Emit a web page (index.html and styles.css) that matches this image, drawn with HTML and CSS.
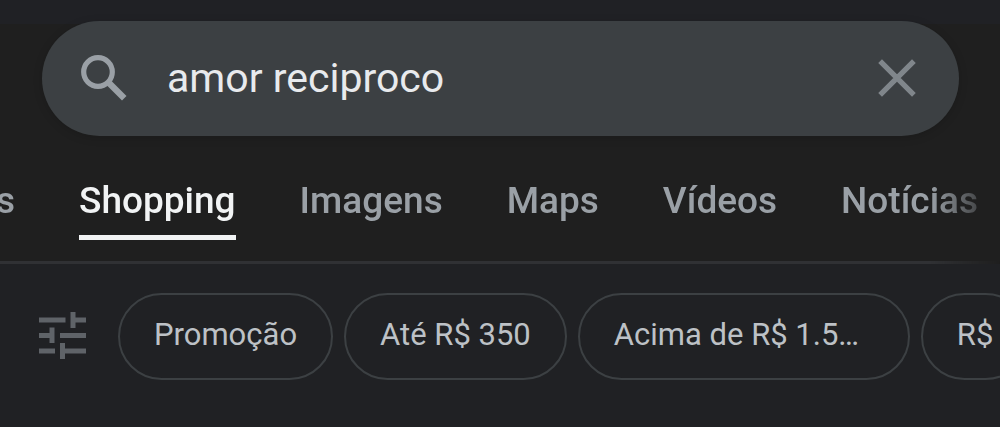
FILE: index.html
```html
<!DOCTYPE html>
<html lang="pt-BR">
<head>
<meta charset="utf-8">
<meta name="viewport" content="width=device-width, initial-scale=1">
<title>amor reciproco</title>
<link rel="stylesheet" href="styles.css">
</head>
<body>
<header class="header">
  <form class="search" role="search">
    <button class="icon-button" type="submit" aria-label="Pesquisar">
      <svg class="search-icon" viewBox="0 0 46 46" aria-hidden="true"><circle cx="17" cy="17" r="14.3" fill="none" stroke="currentColor" stroke-width="5.2"/><path d="M26 30.5 30.5 26l15 15-4.500 4.500z" fill="currentColor"/><path d="m26 26 5 5" stroke="currentColor" stroke-width="4"/></svg>
    </button>
    <input class="search-input" type="text" value="amor reciproco" aria-label="Pesquisa">
    <button class="icon-button clear" type="reset" aria-label="Limpar">
      <svg class="clear-icon" viewBox="0 0 36 36" aria-hidden="true"><path d="M2 2l32 32M34 2 2 34" stroke="currentColor" stroke-width="5"/></svg>
    </button>
  </form>
  <nav class="tabs">
    <a class="tab" href="#">s</a>
    <a class="tab active" href="#" aria-current="page">Shopping</a>
    <a class="tab" href="#">Imagens</a>
    <a class="tab" href="#">Maps</a>
    <a class="tab" href="#">Vídeos</a>
    <a class="tab" href="#">Notícias</a>
  </nav>
</header>
<main class="filters">
  <button class="icon-button tune" type="button" aria-label="Filtros">
    <svg class="tune-icon" viewBox="0 0 48 48" aria-hidden="true"><path fill="currentColor" d="M0 5.500h26.500v5H0zM31.500 0h5v5.500H47v5H36.500V16h-5zM0 21h10.500v-5.500h5V31h-5v-5H0zM21 21h26v5H21zM0 36.500h16v5H0zM21 31h5v5.500h21v5H26V47h-5z"/></svg>
  </button>
  <button class="chip" type="button">Promoção</button>
  <button class="chip" type="button">Até R$ 350</button>
  <button class="chip wide" type="button">Acima de R$ 1.5…</button>
  <button class="chip" type="button">R$</button>
</main>
</body>
</html>
```
FILE: styles.css
```css
* { box-sizing: border-box; }

body {
  margin: 0;
  background: #202124;
  font-family: Roboto, "Liberation Sans", sans-serif;
  overflow-x: hidden;
}

.header {
  padding-top: 21px;
  background: linear-gradient(#202125 24px, #1f1f1f 24px);
}

.search {
  display: flex;
  align-items: center;
  height: 115px;
  margin: 0 41px 0 42px;
  padding: 0 43px 2px 39px;
  border-radius: 58px;
  background: #3c4043;
  box-shadow: 0 2px 10px rgba(0, 0, 0, 0.15);
}

.icon-button {
  display: flex;
  flex: none;
  padding: 0;
  border: 0;
  background: none;
  color: #9aa0a6;
}

.icon-button.clear { color: #80868b; }

.search-icon { width: 46px; height: 46px; }
.clear-icon { width: 38px; height: 38px; }

.search-input {
  flex: 1;
  min-width: 0;
  margin: 0 40px;
  padding: 0;
  border: 0;
  outline: 0;
  background: none;
  color: #e8eaed;
  font: 400 41px/56px Roboto, "Liberation Sans", sans-serif;
}

.tabs {
  display: flex;
  gap: 64px;
  height: 128px;
  padding-top: 40px;
  overflow: hidden;
  border-bottom: 3px solid #303134;
  -webkit-mask-image: linear-gradient(to right, #000 calc(100% - 70px), transparent);
  mask-image: linear-gradient(to right, #000 calc(100% - 70px), transparent);
}

.tab {
  flex: none;
  height: 64px;
  color: #9aa0a6;
  font: 500 37px/50px Roboto, "Liberation Sans", sans-serif;
  text-decoration: none;
}

.tab:first-child { margin-left: -4px; }

.tab.active {
  border-bottom: 5px solid #f1f3f4;
  color: #f1f3f4;
}

.filters {
  display: flex;
  align-items: center;
  gap: 11px;
  padding: 29px 0 46px 39px;
  overflow: hidden;
}

.icon-button.tune {
  margin-right: 20px;
  padding-bottom: 2px;
  color: #5f6368;
}

.tune-icon { width: 48px; height: 48px; }

.chip {
  flex: none;
  height: 87px;
  padding: 0 34px 3px;
  border: 2px solid #3c4043;
  border-radius: 44px;
  background: none;
  color: #bdc1c6;
  font: 400 31px/40px Roboto, "Liberation Sans", sans-serif;
  text-align: left;
  white-space: nowrap;
}

.chip.wide { width: 332px; }
```
